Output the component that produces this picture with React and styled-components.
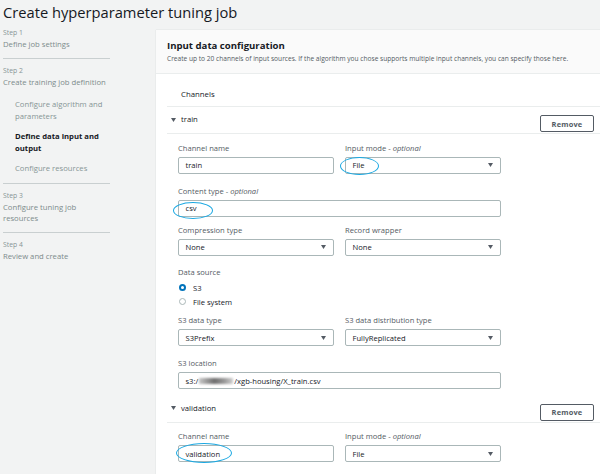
import styled, { createGlobalStyle } from "styled-components";

const GlobalStyle = createGlobalStyle`
  body {
    margin: 0;
    background: #f2f3f3;
    font-family: "Open Sans", "Liberation Sans", sans-serif;
    color: #16191f;
  }
`;

const Page = styled.div`
  width: 600px;
  height: 474px;
  overflow: hidden;
`;

const PageTitle = styled.h1`
  margin: 0;
  height: 27px;
  padding-left: 3px;
  font-size: 14.7px;
  font-weight: 400;
  line-height: 24px;
  color: #16191f;
`;

const Body = styled.div`
  display: flex;
`;

const Sidebar = styled.nav`
  width: 156px;
  flex-shrink: 0;
  padding-left: 3px;
  box-sizing: border-box;
`;

const StepLabel = styled.div`
  font-size: 6.8px;
  line-height: 11px;
  color: #879596;
  margin-bottom: 1px;
`;

const StepTitle = styled.div`
  font-size: 7.7px;
  line-height: 11px;
  color: #7d8b8c;
`;

const SubStep = styled.div`
  font-size: 7.7px;
  line-height: 11.5px;
  padding-left: 12px;
  margin-top: ${(p) => p.$top || 9}px;
  color: ${(p) => (p.$active ? "#16191f" : "#879596")};
  font-weight: ${(p) => (p.$active ? 700 : 400)};
`;

const Divider = styled.hr`
  width: 107px;
  margin: 8px 0 6px;
  border: 0;
  border-top: 1px solid #c9cfd0;
`;

const Panel = styled.main`
  flex: 1;
  margin-top: 3px;
  background: #fff;
  box-shadow: 0 0 1px rgba(0, 28, 36, 0.2);
  min-height: 460px;
`;

const PanelHeader = styled.header`
  background: #fafafa;
  border-bottom: 1px solid #eaeded;
  padding: 10px 11px 10px;
  height: 44px;
  box-sizing: border-box;
`;

const PanelTitle = styled.h2`
  margin: 0;
  font-size: 9.6px;
  font-weight: 700;
  line-height: 12px;
`;

const PanelDesc = styled.p`
  margin: 2px 0 0;
  font-size: 6.6px;
  line-height: 9px;
  color: #545b64;
  white-space: nowrap;
`;

const Content = styled.div`
  margin-left: 11px;
`;

const SectionTitle = styled.div`
  font-size: 7.8px;
  line-height: 11px;
  padding: 15px 0 6px 14px;
  border-bottom: 1px solid #eaeded;
  color: #16191f;
`;

const ChannelHeader = styled.div`
  display: flex;
  align-items: flex-start;
  justify-content: space-between;
  height: 27px;
  box-sizing: border-box;
  padding: 7px 6px 0 4px;
  border-bottom: 1px solid #eaeded;
`;

const ChannelName = styled.div`
  display: flex;
  align-items: center;
  gap: 5px;
  font-size: 7.7px;
  line-height: 11px;
`;

const RemoveButton = styled.button`
  width: 54px;
  height: 17px;
  margin-top: 1px;
  padding: 0;
  background: #fff;
  border: 1px solid #545b64;
  border-radius: 2px;
  font-family: inherit;
  font-size: 7.4px;
  font-weight: 700;
  color: #545b64;
  letter-spacing: 0.2px;
`;

const Fields = styled.div`
  display: flex;
  flex-direction: column;
  padding: 8.5px 0 ${(p) => (p.$bottom != null ? p.$bottom : 6.5)}px 11px;
`;

const Row = styled.div`
  display: flex;
  gap: 11px;
  margin-top: ${(p) => p.$gap || 0}px;
`;

const Field = styled.div`
  width: ${(p) => (p.$wide ? 323 : 156)}px;
`;

const Label = styled.div`
  font-size: 7.6px;
  line-height: 11px;
  color: #545b64;
  margin-bottom: 3px;

  i {
    font-style: italic;
  }
`;

const Control = styled.div`
  position: relative;
  display: flex;
  align-items: center;
  justify-content: space-between;
  height: 17px;
  box-sizing: border-box;
  border: 1px solid #aab7b8;
  border-radius: 2px;
  padding: 0 7px 0 6.5px;
  font-size: 7.6px;
  color: #16191f;
  background: #fff;
`;

const Blurred = styled.span`
  display: inline-block;
  width: 34px;
  height: 6px;
  margin: 0 1px;
  background: linear-gradient(90deg, #c8c8c8, #6f6f6f 45%, #9a9a9a 75%, #d0d0d0);
  filter: blur(1px);
  vertical-align: middle;
`;

const Mark = styled.span`
  position: absolute;
  left: ${(p) => p.$x}px;
  top: ${(p) => p.$y}px;
  width: ${(p) => p.$w}px;
  height: ${(p) => p.$h}px;
  border: 1.5px solid #1aa8e2;
  border-radius: 50%;
  box-sizing: border-box;
  pointer-events: none;
`;

const RadioGroup = styled.div`
  margin-top: 2.5px;
`;

const RadioRow = styled.div`
  display: flex;
  align-items: center;
  gap: 7px;
  height: 14px;
  padding-left: 1px;
  font-size: 7.6px;
  color: #16191f;
`;

const RadioDot = styled.span`
  width: 7px;
  height: 7px;
  border-radius: 50%;
  box-sizing: border-box;
  background: #fff;
  border: ${(p) => (p.$on ? "2.3px solid #0073bb" : "1px solid #aab7b8")};
`;

const Caret = ({ size = 5 }) => (
  <svg width={size} height={size * 0.8} viewBox="0 0 10 8">
    <path d="M0 0 L10 0 L5 8 Z" fill="#545b64" />
  </svg>
);

function Select({ value, mark }) {
  return (
    <Control>
      <span>{value}</span>
      <Caret />
      {mark}
    </Control>
  );
}

function Channel({ name, children }) {
  return (
    <>
      <ChannelHeader>
        <ChannelName>
          <Caret />
          {name}
        </ChannelName>
        <RemoveButton>Remove</RemoveButton>
      </ChannelHeader>
      {children}
    </>
  );
}

export default function App() {
  return (
    <Page>
      <GlobalStyle />
      <PageTitle>Create hyperparameter tuning job</PageTitle>
      <Body>
        <Sidebar>
          <StepLabel>Step 1</StepLabel>
          <StepTitle>Define job settings</StepTitle>
          <Divider />
          <StepLabel>Step 2</StepLabel>
          <StepTitle>Create training job definition</StepTitle>
          <SubStep $top={11}>
            Configure algorithm and
            <br />
            parameters
          </SubStep>
          <SubStep $active>
            Define data input and
            <br />
            output
          </SubStep>
          <SubStep>Configure resources</SubStep>
          <Divider />
          <StepLabel>Step 3</StepLabel>
          <StepTitle>
            Configure tuning job
            <br />
            resources
          </StepTitle>
          <Divider />
          <StepLabel>Step 4</StepLabel>
          <StepTitle>Review and create</StepTitle>
        </Sidebar>

        <Panel>
          <PanelHeader>
            <PanelTitle>Input data configuration</PanelTitle>
            <PanelDesc>
              Create up to 20 channels of input sources. If the algorithm you
              chose supports multiple input channels, you can specify those
              here.
            </PanelDesc>
          </PanelHeader>
          <Content>
            <SectionTitle>Channels</SectionTitle>

            <Channel name="train">
              <Fields>
                <Row>
                  <Field>
                    <Label>Channel name</Label>
                    <Control>train</Control>
                  </Field>
                  <Field>
                    <Label>
                      Input mode - <i>optional</i>
                    </Label>
                    <Select
                      value="File"
                      mark={<Mark $x={-6} $y={-1} $w={39} $h={18} />}
                    />
                  </Field>
                </Row>
                <Row $gap={12}>
                  <Field $wide>
                    <Label>
                      Content type - <i>optional</i>
                    </Label>
                    <Control>
                      csv
                      <Mark $x={-6} $y={1} $w={40} $h={17} />
                    </Control>
                  </Field>
                </Row>
                <Row $gap={8}>
                  <Field>
                    <Label>Compression type</Label>
                    <Select value="None" />
                  </Field>
                  <Field>
                    <Label>Record wrapper</Label>
                    <Select value="None" />
                  </Field>
                </Row>
                <Row $gap={11}>
                  <Field>
                    <Label>Data source</Label>
                    <RadioGroup>
                      <RadioRow>
                        <RadioDot $on />
                        S3
                      </RadioRow>
                      <RadioRow>
                        <RadioDot />
                        File system
                      </RadioRow>
                    </RadioGroup>
                  </Field>
                </Row>
                <Row $gap={6.5}>
                  <Field>
                    <Label>S3 data type</Label>
                    <Select value="S3Prefix" />
                  </Field>
                  <Field>
                    <Label>S3 data distribution type</Label>
                    <Select value="FullyReplicated" />
                  </Field>
                </Row>
                <Row $gap={12}>
                  <Field $wide>
                    <Label>S3 location</Label>
                    <Control>
                      <span>
                        s3:/
                        <Blurred />
                        /xgb-housing/X_train.csv
                      </span>
                    </Control>
                  </Field>
                </Row>
              </Fields>
            </Channel>

            <Channel name="validation">
              <Fields $bottom={20}>
                <Row>
                  <Field>
                    <Label>Channel name</Label>
                    <Control>
                      validation
                      <Mark $x={-3} $y={-3} $w={56} $h={20} />
                    </Control>
                  </Field>
                  <Field>
                    <Label>
                      Input mode - <i>optional</i>
                    </Label>
                    <Select value="File" />
                  </Field>
                </Row>
              </Fields>
            </Channel>
          </Content>
        </Panel>
      </Body>
    </Page>
  );
}
